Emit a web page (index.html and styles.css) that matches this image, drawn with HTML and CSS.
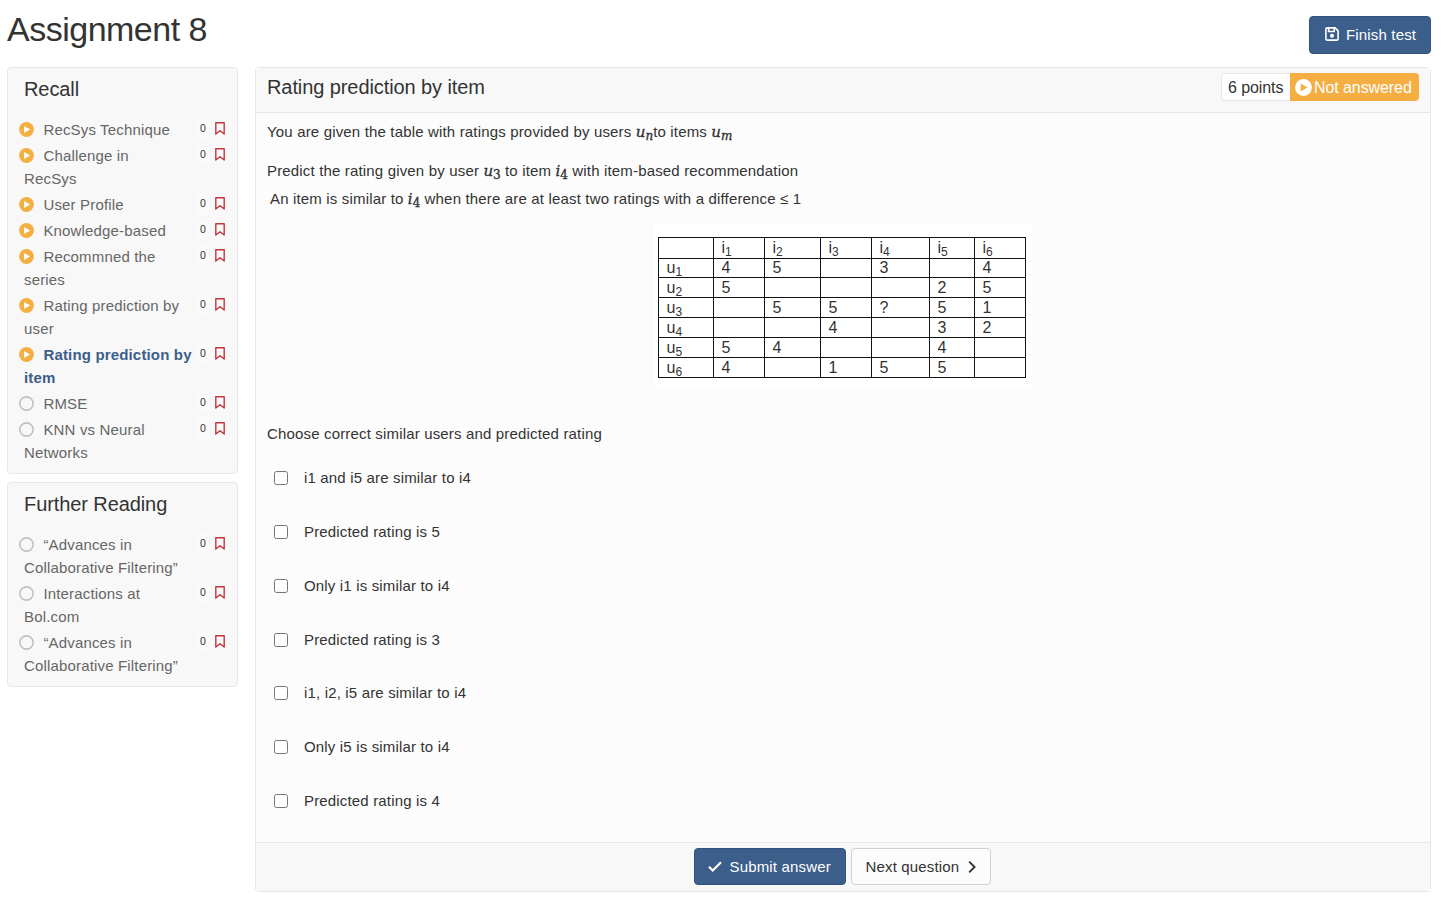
FILE: index.html
```html
<!DOCTYPE html>
<html lang="en">
<head>
<meta charset="utf-8">
<title>Assignment 8</title>
<link rel="stylesheet" href="styles.css">
</head>
<body>
<svg class="defs" width="0" height="0">
  <symbol id="play" viewBox="0 0 16 16"><circle cx="8" cy="8" r="7.9" fill="currentColor"/><path class="hole" d="M5.4 4.3v7.4L11.8 8z"/></symbol>
  <symbol id="ring" viewBox="0 0 16 16"><circle cx="8" cy="8" r="7.1" fill="none" stroke="currentColor" stroke-width="1.7"/></symbol>
  <symbol id="mark" viewBox="0 0 10 13"><path d="M.8 12V.8h8.4V12L5 8.7z" fill="none" stroke="currentColor" stroke-width="1.4" stroke-linejoin="round"/></symbol>
</svg>
<header class="top">
  <h1 class="title">Assignment 8</h1>
  <button class="btn primary finish"><svg class="save" viewBox="0 0 14 14"><path d="M1.9.9h8.2l3 3v8.2a1 1 0 0 1-1 1H1.9a1 1 0 0 1-1-1V1.9a1 1 0 0 1 1-1zM3.6 1v3.5h5.6V1" fill="none" stroke="currentColor" stroke-width="1.6"/><circle cx="7" cy="8.7" r="2" fill="currentColor"/></svg><span>Finish test</span></button>
</header>
<div class="layout">
  <nav class="side">
    <section class="panel">
      <h2 class="heading">Recall</h2>
      <ul class="items">
        <li class="item"><span class="name"><svg class="state on"><use href="#play"/></svg>RecSys Technique</span><span class="count">0</span><svg class="mark"><use href="#mark"/></svg></li>
        <li class="item"><span class="name"><svg class="state on"><use href="#play"/></svg>Challenge in<br>RecSys</span><span class="count">0</span><svg class="mark"><use href="#mark"/></svg></li>
        <li class="item"><span class="name"><svg class="state on"><use href="#play"/></svg>User Profile</span><span class="count">0</span><svg class="mark"><use href="#mark"/></svg></li>
        <li class="item"><span class="name"><svg class="state on"><use href="#play"/></svg>Knowledge-based</span><span class="count">0</span><svg class="mark"><use href="#mark"/></svg></li>
        <li class="item"><span class="name"><svg class="state on"><use href="#play"/></svg>Recommned the<br>series</span><span class="count">0</span><svg class="mark"><use href="#mark"/></svg></li>
        <li class="item"><span class="name"><svg class="state on"><use href="#play"/></svg>Rating prediction by<br>user</span><span class="count">0</span><svg class="mark"><use href="#mark"/></svg></li>
        <li class="item active"><span class="name"><svg class="state on"><use href="#play"/></svg>Rating prediction by<br>item</span><span class="count">0</span><svg class="mark"><use href="#mark"/></svg></li>
        <li class="item"><span class="name"><svg class="state"><use href="#ring"/></svg>RMSE</span><span class="count">0</span><svg class="mark"><use href="#mark"/></svg></li>
        <li class="item"><span class="name"><svg class="state"><use href="#ring"/></svg>KNN vs Neural<br>Networks</span><span class="count">0</span><svg class="mark"><use href="#mark"/></svg></li>
      </ul>
    </section>
    <section class="panel">
      <h2 class="heading">Further Reading</h2>
      <ul class="items">
        <li class="item"><span class="name"><svg class="state"><use href="#ring"/></svg>“Advances in<br>Collaborative Filtering”</span><span class="count">0</span><svg class="mark"><use href="#mark"/></svg></li>
        <li class="item"><span class="name"><svg class="state"><use href="#ring"/></svg>Interactions at<br>Bol.com</span><span class="count">0</span><svg class="mark"><use href="#mark"/></svg></li>
        <li class="item"><span class="name"><svg class="state"><use href="#ring"/></svg>“Advances in<br>Collaborative Filtering”</span><span class="count">0</span><svg class="mark"><use href="#mark"/></svg></li>
      </ul>
    </section>
  </nav>
  <main class="question">
    <div class="qhead">
      <h2 class="qtitle">Rating prediction by item</h2>
      <div class="tags"><span class="points">6 points</span><span class="status"><svg class="badge-icon"><use href="#play"/></svg>Not answered</span></div>
    </div>
    <div class="qbody">
      <p class="intro">You are given the table with ratings provided by users <i class="math">u<sub>n</sub></i>to items <i class="math">u<sub>m</sub></i></p>
      <p class="task">Predict the rating given by user <i class="math">u<sub class="num">3</sub></i> to item <i class="math">i<sub class="num">4</sub></i> with item-based recommendation</p>
      <p class="hint">An item is similar to <i class="math">i<sub class="num">4</sub></i> when there are at least two ratings with a difference ≤ 1</p>
      <div class="figure">
        <table class="ratings">
          <colgroup><col class="c55"><col class="c51"><col class="c56"><col class="c51"><col class="c58"><col class="c45"><col class="c51"></colgroup>
          <tr class="first"><td></td><td>i<sub>1</sub></td><td>i<sub>2</sub></td><td>i<sub>3</sub></td><td>i<sub>4</sub></td><td>i<sub>5</sub></td><td>i<sub>6</sub></td></tr>
          <tr class="short"><td>u<sub>1</sub></td><td>4</td><td>5</td><td></td><td>3</td><td></td><td>4</td></tr>
          <tr><td>u<sub>2</sub></td><td>5</td><td></td><td></td><td></td><td>2</td><td>5</td></tr>
          <tr><td>u<sub>3</sub></td><td></td><td>5</td><td>5</td><td>?</td><td>5</td><td>1</td></tr>
          <tr><td>u<sub>4</sub></td><td></td><td></td><td>4</td><td></td><td>3</td><td>2</td></tr>
          <tr><td>u<sub>5</sub></td><td>5</td><td>4</td><td></td><td></td><td>4</td><td></td></tr>
          <tr><td>u<sub>6</sub></td><td>4</td><td></td><td>1</td><td>5</td><td>5</td><td></td></tr>
        </table>
      </div>
      <p class="choose">Choose correct similar users and predicted rating</p>
      <div class="options">
        <label class="option"><input type="checkbox" class="check">i1 and i5 are similar to i4</label>
        <label class="option"><input type="checkbox" class="check">Predicted rating is 5</label>
        <label class="option"><input type="checkbox" class="check">Only i1 is similar to i4</label>
        <label class="option"><input type="checkbox" class="check">Predicted rating is 3</label>
        <label class="option"><input type="checkbox" class="check">i1, i2, i5 are similar to i4</label>
        <label class="option"><input type="checkbox" class="check">Only i5 is similar to i4</label>
        <label class="option"><input type="checkbox" class="check">Predicted rating is 4</label>
      </div>
    </div>
    <div class="qfoot">
      <button class="btn primary submit"><svg class="tick" viewBox="0 0 14 11"><path d="M1 5.8l3.7 3.7L13 1.2" fill="none" stroke="currentColor" stroke-width="2.2"/></svg><span>Submit answer</span></button>
      <button class="btn next"><span>Next question</span><svg class="chev" viewBox="0 0 9 14"><path d="M1.3 1l6 6-6 6" fill="none" stroke="currentColor" stroke-width="2.1"/></svg></button>
    </div>
  </main>
</div>
</body>
</html>
```

FILE: styles.css
```css
* { box-sizing: border-box; }
body { margin: 0; padding: 0 14px 0 7px; background: #fff; color: #333; font: 15px/23px "Liberation Sans", Arial, sans-serif; letter-spacing: .165px; }
h1, h2, p, ul { margin: 0; padding: 0; font-weight: 400; }
.defs { position: absolute; }
.top { display: flex; justify-content: space-between; height: 67px; }
.title { font-size: 34px; line-height: 38px; padding: 10px 0 0; letter-spacing: -.5px; }
.btn { display: flex; align-items: center; border: 1px solid #d0d0d0; border-radius: 4px; background: #fcfcfc; color: #333; font: inherit; letter-spacing: inherit; height: 37px; padding: 0 13px; white-space: nowrap; }
.primary { background: #3c5e8b; border-color: #31527e; color: #fff; }
.finish { width: 122px; height: 38px; margin-top: 16px; padding: 0 0 2px 15px; gap: 7px; }
.save { width: 14px; height: 14px; }
.layout { display: flex; gap: 17px; align-items: flex-start; }
.side { width: 231px; display: flex; flex-direction: column; gap: 8px; }
.panel { border: 1px solid #e7e7e7; border-radius: 4px; background: #f8f8f8; padding: 9px 11px 7px; }
.heading { font-size: 20px; line-height: 24px; padding-left: 5px; margin-bottom: 16px; letter-spacing: -.09px; }
.items { list-style: none; }
.item { display: flex; align-items: flex-start; padding: 1px 0 2px; color: #666; }
.name { flex: 1; padding-left: 5px; white-space: nowrap; }
.state { width: 15px; height: 15px; margin: 0 9.4px 0 -5px; vertical-align: -2px; color: #c0c0c0; }
.on { color: #f4ae42; }
.hole { fill: var(--hole, #fff); }
.active { color: #3c5e8b; }
.active .name { font-weight: 700; }
.count { width: 13px; height: 21px; background: #fafafa; color: #333; font-size: 10.5px; line-height: 21px; text-align: center; padding-left: 1px; }
.mark { width: 10px; height: 13px; margin: 4px 1px 0 6px; color: #c4353f; }
.question { flex: 1; border: 1px solid #e7e7e7; border-radius: 4px; background: #fcfcfc; }
.qhead { display: flex; justify-content: space-between; height: 45px; padding: 5px 11px 0; background: #f8f8f8; border-bottom: 1px solid #e7e7e7; }
.qtitle { font-size: 20px; line-height: 28px; letter-spacing: -.09px; }
.tags { display: flex; height: 28px; font-size: 16px; line-height: 28px; white-space: nowrap; letter-spacing: -.08px; }
.points { width: 69px; padding: 1px 0 0 6px; background: #fff; border: 1px solid #e7e7e7; border-right: 0; border-radius: 4px 0 0 4px; line-height: 26px; }
.status { display: flex; align-items: center; width: 129px; padding: 1px 0 0 5px; background: #f4ae42; color: #fff; border-radius: 0 4px 4px 0; }
.badge-icon { width: 17px; height: 17px; margin-right: 2px; --hole: #f4ae42; }
.qbody { height: 729px; padding: 7px 11px 0; white-space: nowrap; }
.intro { height: 39px; }
.task { height: 28px; }
.hint { height: 36px; padding-left: 3px; }
.math { font: italic 15px/15px "DejaVu Serif", serif; letter-spacing: 0; -webkit-text-stroke: .35px; }
.math sub { font-size: 12px; line-height: 0; vertical-align: -3px; }
.math .num { font-style: normal; }
.figure { width: 378px; height: 166px; margin: 0 auto 33px; padding: 14px 0 0 4px; background: #fff; }
.ratings { table-layout: fixed; border-collapse: collapse; width: 368px; font-size: 16px; line-height: 18px; letter-spacing: 0; }
.ratings td { height: 20px; padding: 0 0 0 7.5px; border: 1px solid #111; }
.ratings .first td { height: 21px; }
.ratings .short td { height: 19px; }
.ratings sub { font-size: 12px; line-height: 0; vertical-align: -3px; }
.c55 { width: 55px; }
.c51 { width: 51px; }
.c56 { width: 56px; }
.c58 { width: 58px; }
.c45 { width: 45px; }
.choose { height: 44px; }
.options { padding-left: 7px; }
.option { display: flex; align-items: center; height: 53.85px; padding-bottom: 30.85px; }
.check { width: 14px; height: 14px; margin: 1px 16px 0 0; }
.qfoot { display: flex; justify-content: center; gap: 5px; height: 49px; padding: 5px 2px 0 0; background: #f8f8f8; border-top: 1px solid #e7e7e7; }
.submit { width: 152px; gap: 8px; }
.tick { width: 14px; height: 11px; }
.next { width: 140px; padding-left: 14px; gap: 9px; }
.chev { width: 9px; height: 14px; }
```
